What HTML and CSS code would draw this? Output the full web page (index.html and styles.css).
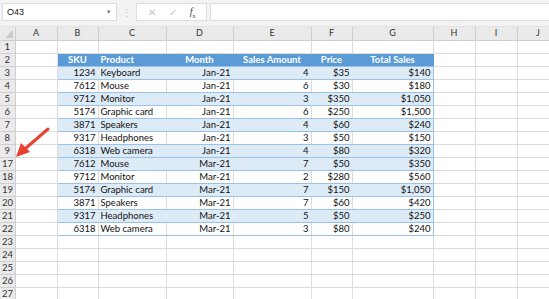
FILE: index.html
```html
<!DOCTYPE html>
<html lang="en">
<head>
  <meta charset="UTF-8">
  <title>Sales Sheet</title>
  <link rel="stylesheet" href="styles.css">
</head>
<body>

  <!-- Formula bar -->
  <div class="formula-bar">
    <div class="name-box">
      <span>O43</span>
      <span class="caret">&#9662;</span>
    </div>
    <div class="grip">&#8942;</div>
    <div class="fx-box">
      <span class="fx-icon muted">&#10005;</span>
      <span class="fx-icon muted">&#10003;</span>
      <span class="fx-icon fx"><i>f</i><sub>x</sub></span>
    </div>
    <div class="formula-input"></div>
  </div>

  <!-- Sheet -->
  <div class="sheet">
    <table class="grid">
      <colgroup>
        <col class="c-hdr"><col class="c-a"><col class="c-b"><col class="c-c"><col class="c-d">
        <col class="c-e"><col class="c-f"><col class="c-g"><col class="c-h"><col class="c-i"><col class="c-j">
      </colgroup>
      <thead>
        <tr class="col-heads">
          <th class="corner"><span class="corner-tri"></span></th>
          <th>A</th><th>B</th><th>C</th><th>D</th><th>E</th><th>F</th><th>G</th><th>H</th><th>I</th><th>J</th>
        </tr>
      </thead>
      <tbody id="rows"></tbody>
    </table>

    <svg class="arrow" width="40" height="34" viewBox="0 0 40 34">
      <line x1="35" y1="3" x2="13" y2="22" stroke="#e8412f" stroke-width="3" stroke-linecap="round"/>
      <polygon points="3,31 8,17 17,26" fill="#e8412f"/>
    </svg>
  </div>

  <script src="app.js"></script>
</body>
</html>
```

FILE: styles.css
```css
/* Base styles */
* {
  margin: 0;
  padding: 0;
  box-sizing: border-box;
}

body {
  width: 549px;
  height: 299px;
  overflow: hidden;
  background: #ffffff;
  font-family: 'Lato', 'Liberation Sans', sans-serif;
  font-size: 9.5px;
  color: #111;
}

/* Formula bar */
.formula-bar {
  height: 27px;
  background: #f3f3f3;
  display: flex;
  align-items: flex-start;
  padding-top: 3px;
  border-bottom: 1px solid #e2e2e2;
}

.name-box {
  width: 115px;
  height: 18px;
  margin-left: 2px;
  background: #ffffff;
  border: 1px solid #dcdcdc;
  display: flex;
  align-items: center;
  justify-content: space-between;
  padding: 0 5px 0 4px;
  font-family: 'Liberation Sans', sans-serif;
  font-size: 9px;
  color: #222;
}

.caret {
  font-size: 7px;
  color: #777;
}

.grip {
  width: 19px;
  text-align: center;
  color: #c6c6c6;
  font-size: 10px;
  line-height: 18px;
}

.fx-box {
  width: 71px;
  height: 18px;
  background: #ffffff;
  border: 1px solid #dcdcdc;
  display: flex;
  align-items: center;
  justify-content: space-around;
  padding: 0 4px;
}

.fx-icon {
  font-size: 10px;
  color: #c4c4c4;
}

.fx-icon.fx {
  font-family: 'Liberation Serif', serif;
  color: #444;
  font-size: 10px;
}

.fx-icon.fx sub {
  font-size: 6px;
}

.formula-input {
  flex: 1;
  height: 18px;
  margin-left: 3px;
  background: #ffffff;
  border: 1px solid #dcdcdc;
  border-right: none;
}

/* Sheet grid */
.sheet {
  position: relative;
}

.grid {
  border-collapse: collapse;
  table-layout: fixed;
  width: 559px;
}

.c-hdr { width: 15px; }
.c-a { width: 42px; }
.c-b { width: 41px; }
.c-c { width: 68px; }
.c-d { width: 67px; }
.c-e { width: 78px; }
.c-f { width: 41px; }
.c-g { width: 81px; }
.c-h { width: 42px; }
.c-i { width: 42px; }
.c-j { width: 42px; }

.grid th,
.grid td {
  height: 13px;
  line-height: 12px;
  padding: 0 2px;
  white-space: nowrap;
  overflow: hidden;
  border-right: 1px solid #dcdcdc;
  border-bottom: 1px solid #dcdcdc;
}

.col-heads th {
  background: #eaeaea;
  color: #333;
  font-weight: normal;
  font-size: 9px;
  text-align: center;
  border-right: 1px solid #cfcfcf;
  border-bottom: 1px solid #cfcfcf;
}

.corner {
  position: relative;
}

.corner-tri {
  position: absolute;
  right: 2px;
  bottom: 2px;
  width: 0;
  height: 0;
  border-left: 8px solid transparent;
  border-bottom: 8px solid #c9c9c9;
}

.row-num {
  background: #eaeaea;
  color: #333;
  text-align: center;
  font-size: 9.5px;
  border-right: 1px solid #cfcfcf !important;
  border-bottom: 1px solid #cfcfcf !important;
}

/* Excel table */
.tbl-head {
  background: #5b9bd5;
  color: #ffffff;
  font-weight: bold;
  text-align: center;
  border-right-color: #5b9bd5 !important;
  border-bottom-color: #9bc2e6 !important;
}

.tbl-head.left {
  text-align: left;
}

.tbl-cell {
  border-bottom-color: #9bc2e6 !important;
}

.tbl-cell.band {
  background: #ddebf7;
  border-right-color: #ddebf7;
}

.tbl-cell.first {
  border-left: 1px solid #9bc2e6;
}

.tbl-cell.last {
  border-right-color: #9bc2e6 !important;
}

.num {
  text-align: right;
}

.arrow {
  position: absolute;
  left: 13px;
  top: 99px;
}
```

FILE: app.js
```js
// rows shown (10-16 are hidden in the sheet)
const data = [
  [1234, 'Keyboard', 'Jan-21', 4, '$35', '$140'],
  [7612, 'Mouse', 'Jan-21', 6, '$30', '$180'],
  [9712, 'Monitor', 'Jan-21', 3, '$350', '$1,050'],
  [5174, 'Graphic card', 'Jan-21', 6, '$250', '$1,500'],
  [3871, 'Speakers', 'Jan-21', 4, '$60', '$240'],
  [9317, 'Headphones', 'Jan-21', 3, '$50', '$150'],
  [6318, 'Web camera', 'Jan-21', 4, '$80', '$320'],
  [7612, 'Mouse', 'Mar-21', 7, '$50', '$350'],
  [9712, 'Monitor', 'Mar-21', 2, '$280', '$560'],
  [5174, 'Graphic card', 'Mar-21', 7, '$150', '$1,050'],
  [3871, 'Speakers', 'Mar-21', 7, '$60', '$420'],
  [9317, 'Headphones', 'Mar-21', 5, '$50', '$250'],
  [6318, 'Web camera', 'Mar-21', 3, '$80', '$240']
];

const rowNums = [1, 2, 3, 4, 5, 6, 7, 8, 9, 17, 18, 19, 20, 21, 22, 23, 24, 25, 26, 27];
const heads = ['SKU', 'Product', 'Month', 'Sales Amount', 'Price', 'Total Sales'];
const tbody = document.getElementById('rows');

rowNums.forEach(function (n, i) {
  let html = '<td class="row-num">' + n + '</td><td></td>';

  if (n === 2) {
    heads.forEach(function (h, j) {
      html += '<th class="tbl-head' + (j === 1 ? ' left' : '') + '">' + h + '</th>';
    });
  } else if (i >= 2 && i - 2 < data.length) {
    const d = data[i - 2];
    const band = n % 2 === 1 ? ' band' : '';
    d.forEach(function (v, j) {
      let cls = 'tbl-cell' + band;
      if (j !== 1) cls += ' num';
      if (j === 0) cls += ' first';
      if (j === 5) cls += ' last';
      html += '<td class="' + cls + '">' + v + '</td>';
    });
  } else {
    html += '<td></td><td></td><td></td><td></td><td></td><td></td>';
  }

  html += '<td></td><td></td><td></td>';
  const tr = document.createElement('tr');
  tr.innerHTML = html;
  tbody.appendChild(tr);
});
```
